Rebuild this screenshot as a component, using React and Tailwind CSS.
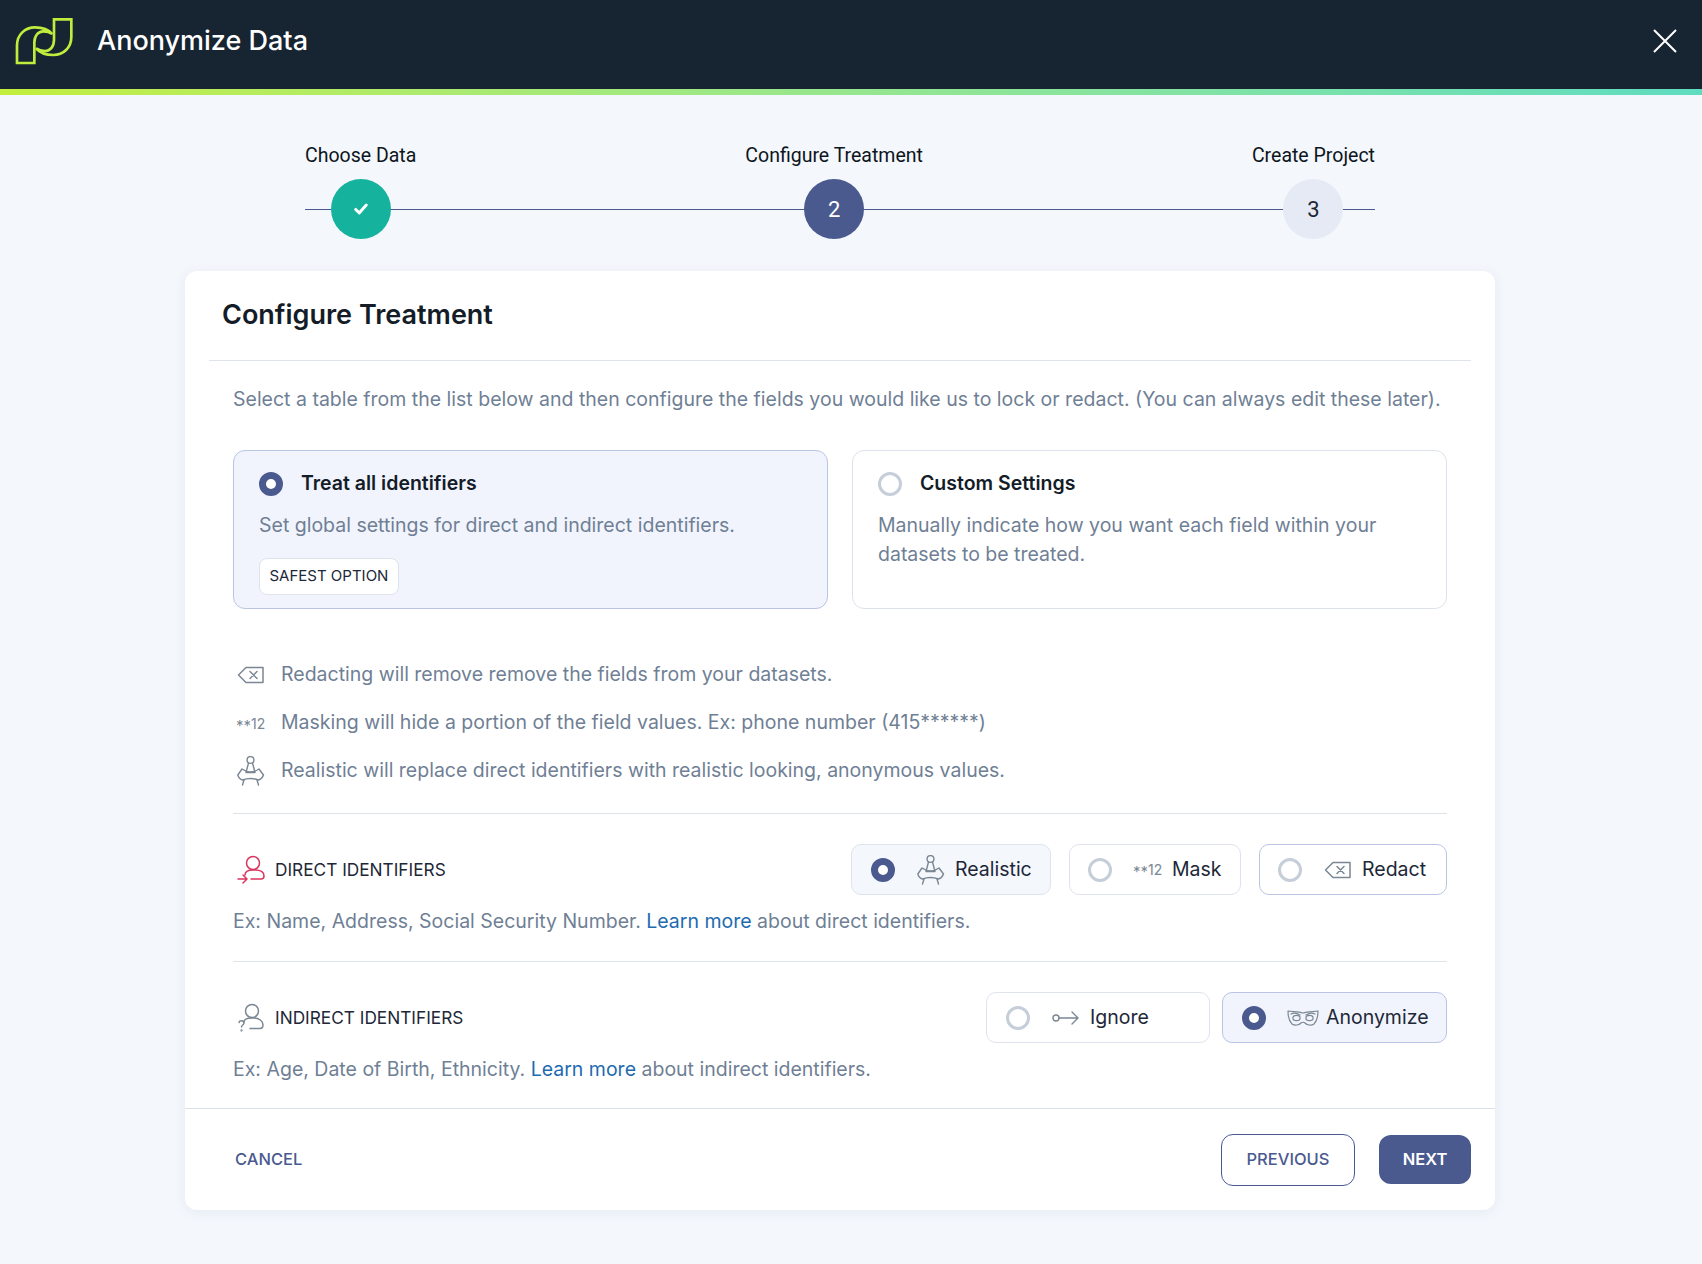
import React from "react";

const F = { fontFamily: "Inter, sans-serif" };

function Logo() {
  return (
    <svg width="70" height="58" viewBox="0 0 210 174" fill="none" stroke="#c0ec3e" strokeWidth="8" strokeLinejoin="miter">
      <path d="M21 153 V100 C21 68 45 46 75 46 C95 46 115 52 127 66 C118 60 108 58 100 58 C84 58 73 72 73 92 V153 Z" />
      <path d="M21 153 V100 C21 68 45 46 75 46 C95 46 115 52 127 66 C118 60 108 58 100 58 C84 58 73 72 73 92 V153 Z" transform="rotate(180 102.5 87.5)" />
    </svg>
  );
}

function RedactIcon() {
  return (
    <svg width="28" height="18" viewBox="0 0 28 18" fill="none" stroke="#7b8794" strokeWidth="1.5" strokeLinejoin="round" strokeLinecap="round">
      <path d="M9 1.5 H26 V16.5 H9 L1.5 9 Z" />
      <path d="M13 5.5 L20 12.5 M20 5.5 L13 12.5" />
    </svg>
  );
}

function MaskText() {
  return (
    <span className="w-[28px] -ml-[1px] text-[14px] leading-none text-[#7b8794] whitespace-nowrap">
      <span className="relative top-[2px] text-[15px]">**</span>12
    </span>
  );
}

function RealisticIcon() {
  return (
    <svg width="28" height="30" viewBox="0 0 28 30" fill="none" stroke="#7b8794" strokeWidth="1.4" strokeLinejoin="round" strokeLinecap="round">
      <circle cx="13.5" cy="4" r="3.4" />
      <path d="M11.5 7 L9 16.5 M15.5 7 L18 16.5 M9 16.5 H18" />
      <path d="M5 13 Q13.5 19 22 13 L26.5 19 Q25 23 21.5 24 Q13.5 21 5.5 24 Q2 23 0.8 19 Z" />
      <path d="M7 24 L5.5 29 M20 24 L21.5 29" />
    </svg>
  );
}

function DirectIcon() {
  return (
    <svg width="28" height="30" viewBox="0 0 28 30" fill="none" stroke="#d9365f" strokeWidth="1.5" strokeLinecap="round" strokeLinejoin="round">
      <circle cx="16" cy="8" r="6.5" />
      <path d="M8 20 C8 16.5 11 15 16 15 H18 C23 15 27 17 27 21 C27 23 26 24 24 24 H14" />
      <path d="M1 24 H10 M6 20 L10 24 L6 28" />
    </svg>
  );
}

function IndirectIcon() {
  return (
    <svg width="28" height="30" viewBox="0 0 28 30" fill="none" stroke="#7b8794" strokeWidth="1.5" strokeLinecap="round" strokeLinejoin="round">
      <circle cx="15" cy="8" r="6.5" />
      <path d="M7 19 C7 16 11 15 15 15 H17 C22 15 26 18 26 22 C26 24.5 25 25.5 23 25.5 H13" />
      <path d="M2 19.5 C2.5 17 7 17 7 20 C7 22 4.5 22 4.5 24" />
      <circle cx="4.5" cy="27.5" r="0.4" />
    </svg>
  );
}

function IgnoreIcon() {
  return (
    <svg width="28" height="16" viewBox="0 0 28 16" fill="none" stroke="#7b8794" strokeWidth="1.4" strokeLinecap="round" strokeLinejoin="round">
      <circle cx="4" cy="8" r="3" />
      <path d="M7 8 H26 M20 2 L26 8 L20 14" />
    </svg>
  );
}

function MaskIcon() {
  return (
    <svg width="32" height="18" viewBox="0 0 32 18" fill="none" stroke="#7b8794" strokeWidth="1.2" strokeLinecap="round" strokeLinejoin="round">
      <path d="M1 2 C5 3 11 2 16 4 C21 2 27 3 31 2 C31 7 30 12 27 15 C24 17 20 16 18 14 C17 13 15 13 14 14 C12 16 8 17 5 15 C2 12 1 7 1 2 Z" />
      <ellipse cx="9.5" cy="9" rx="3.6" ry="2.6" />
      <ellipse cx="22.5" cy="9" rx="3.6" ry="2.6" />
      <path d="M4 5 C6 4 10 4 13 6 M28 5 C26 4 22 4 19 6" />
    </svg>
  );
}

function Radio({ on }) {
  return on ? (
    <span className="shrink-0 w-6 h-6 rounded-full border-[7px] border-[#4a5a8f] bg-white" />
  ) : (
    <span className="shrink-0 w-6 h-6 rounded-full border-[3px] border-[#c5ced9] bg-white" />
  );
}

function Step({ label, children, className }) {
  return (
    <div className="flex flex-col items-center relative z-10">
      <div className="text-[19.5px] h-[22px] leading-[23px] text-[#0d1520] whitespace-nowrap font-['Roboto',sans-serif]">{label}</div>
      <div className={"mt-[13px] w-[60px] h-[60px] rounded-full flex items-center justify-center text-[22px] font-['Roboto',sans-serif] " + className}>
        {children}
      </div>
    </div>
  );
}

function Option({ on, width, border, bg, icon, label, gap, pad = "pl-[19px]" }) {
  return (
    <div className={"h-[51px] rounded-[10px] border flex items-center " + pad + " " + width + " " + border + " " + bg}>
      <Radio on={on} />
      <span className={"flex items-center " + gap}>
        {icon}
        <span className="text-[19.5px] text-[#1d2737]">{label}</span>
      </span>
    </div>
  );
}

function Bullet({ icon, children }) {
  return (
    <div className="h-[48px] flex items-center">
      <span className="w-[48px] pl-[4px] flex items-center shrink-0">{icon}</span>
      <span className="text-[19.5px] text-[#6f7f95]">{children}</span>
    </div>
  );
}

export default function App() {
  return (
    <div style={F} className="min-h-[1264px] bg-[#f4f7fc] flex flex-col">
      <header className="h-[89px] bg-[#172432] flex items-center pl-[10px] pr-[25px] shrink-0">
        <span className="-mt-[7px] flex"><Logo /></span>
        <h1 className="ml-[17px] text-[27px] font-medium text-white leading-none -mt-[8px]">Anonymize Data</h1>
        <svg className="ml-auto -mt-[7px]" width="24" height="24" viewBox="0 0 24 24" stroke="#fff" strokeWidth="2" fill="none">
          <path d="M1 1 L23 23 M23 1 L1 23" />
        </svg>
      </header>
      <div className="h-[6px] shrink-0 bg-gradient-to-r from-[#c3ee3c] to-[#5fdcc0]" />

      <div className="mt-[49px] ml-[305px] w-[1070px] relative flex justify-between">
        <div className="absolute left-0 right-0 top-[65px] h-px bg-[#4a5a8f]" />
        <Step label="Choose Data" className="bg-[#15b29d] text-white">
          <svg width="14" height="12" viewBox="0 0 16 13" fill="none" stroke="#fff" strokeWidth="3.4" strokeLinecap="round" strokeLinejoin="round">
            <path d="M2 7 L6 11 L14 2" />
          </svg>
        </Step>
        <Step label="Configure Treatment" className="bg-[#4a5a8f] text-white">2</Step>
        <Step label="Create Project" className="bg-[#e6eaf5] text-[#1d2737]">3</Step>
      </div>

      <main className="mt-[32px] ml-[185px] w-[1310px] h-[939px] bg-white rounded-[12px] shadow-[0_2px_12px_rgba(100,120,170,0.10)] flex flex-col">
        <div className="mx-[24px] h-[90px] border-b border-[#dfe3ea] pl-[13px] pt-[26px]">
          <h2 className="text-[27px] leading-[36px] font-semibold text-[#141c28]">Configure Treatment</h2>
        </div>
        <div className="px-[48px] flex-1">
          <p className="mt-[23px] text-[19.5px] leading-[30px] text-[#6f7f95] whitespace-nowrap">
            Select a table from the list below and then configure the fields you would like us to lock or redact. (You can always edit these later).
          </p>

          <div className="mt-[36px] grid grid-cols-2 gap-[24px]">
            <div className="h-[159px] rounded-[12px] border border-[#b9c5e3] bg-[#f1f4fc] px-[25px] pt-[20px]">
              <div className="flex items-center gap-[18px]">
                <Radio on />
                <span className="text-[19.5px] leading-[26px] -mt-[1px] font-semibold text-[#141c28]">Treat all identifiers</span>
              </div>
              <p className="mt-[15px] text-[19.5px] leading-[29px] text-[#6f7f95]">Set global settings for direct and indirect identifiers.</p>
              <span className="mt-[18px] inline-flex items-center h-[37px] px-[9.5px] rounded-[8px] border border-[#dfe3ee] bg-white text-[15px] text-[#1d2737]">SAFEST OPTION</span>
            </div>
            <div className="h-[159px] rounded-[12px] border border-[#dde2ec] bg-white px-[25px] pt-[20px]">
              <div className="flex items-center gap-[18px]">
                <Radio />
                <span className="text-[19.5px] leading-[26px] -mt-[1px] font-semibold text-[#141c28]">Custom Settings</span>
              </div>
              <p className="mt-[15px] text-[19.5px] leading-[29px] text-[#6f7f95]">Manually indicate how you want each field within your datasets to be treated.</p>
            </div>
          </div>

          <div className="mt-[42px]">
            <Bullet icon={<RedactIcon />}>Redacting will remove remove the fields from your datasets.</Bullet>
            <Bullet icon={<MaskText />}>Masking will hide a portion of the field values. Ex: phone number (415******)</Bullet>
            <Bullet icon={<RealisticIcon />}>Realistic will replace direct identifiers with realistic looking, anonymous values.</Bullet>
          </div>

          <div className="mt-[18px] border-t border-[#dfe3ea] pt-[30px]">
            <div className="flex items-center">
              <span className="w-[42px] pl-[4px] flex items-center shrink-0"><DirectIcon /></span>
              <span className="text-[17.25px] text-[#1d2737]">DIRECT IDENTIFIERS</span>
              <div className="ml-auto flex gap-[18px]">
                <Option on width="w-[200px]" border="border-[#dfe3ee]" bg="bg-[#f4f7fc]" gap="ml-[22px] gap-[10px]" icon={<RealisticIcon />} label="Realistic" />
                <Option width="w-[172px]" pad="pl-[18px]" border="border-[#dfe3ee]" bg="bg-white" gap="ml-[22px] gap-[11px]" icon={<MaskText />} label="Mask" />
                <Option width="w-[188px]" pad="pl-[18px]" border="border-[#b9c5e3]" bg="bg-white" gap="ml-[22px] gap-[10px]" icon={<RedactIcon />} label="Redact" />
              </div>
            </div>
            <p className="mt-[11px] text-[19.5px] leading-[30px] text-[#6f7f95]">
              Ex: Name, Address, Social Security Number. <span className="text-[#1e6bb0]">Learn more</span> about direct identifiers.
            </p>
          </div>

          <div className="mt-[25px] border-t border-[#dfe3ea] pt-[30px]">
            <div className="flex items-center">
              <span className="w-[42px] pl-[4px] flex items-center shrink-0"><IndirectIcon /></span>
              <span className="text-[17.25px] text-[#1d2737]">INDIRECT IDENTIFIERS</span>
              <div className="ml-auto flex gap-[12px]">
                <Option width="w-[224px]" border="border-[#dfe3ee]" bg="bg-white" gap="ml-[22px] gap-[10px]" icon={<IgnoreIcon />} label="Ignore" />
                <Option on width="w-[225px]" border="border-[#b9c5e3]" bg="bg-[#f1f4fc]" gap="ml-[21px] gap-[7px]" icon={<MaskIcon />} label="Anonymize" />
              </div>
            </div>
            <p className="mt-[11px] text-[19.5px] leading-[30px] text-[#6f7f95]">
              Ex: Age, Date of Birth, Ethnicity. <span className="text-[#1e6bb0]">Learn more</span> about indirect identifiers.
            </p>
          </div>
        </div>

        <footer className="h-[102px] border-t border-[#d8e0ec] flex items-center px-[24px]">
          <span className="ml-[26px] text-[16.5px] font-medium text-[#4a5a8f]">CANCEL</span>
          <button className="ml-auto w-[134px] h-[52px] rounded-[12px] border border-[#4a5a8f] bg-white text-[16.5px] font-medium text-[#4a5a8f]">PREVIOUS</button>
          <button className="ml-[24px] w-[92px] h-[49px] rounded-[12px] bg-[#4a5a8f] text-[16.5px] font-semibold text-white">NEXT</button>
        </footer>
      </main>
    </div>
  );
}
